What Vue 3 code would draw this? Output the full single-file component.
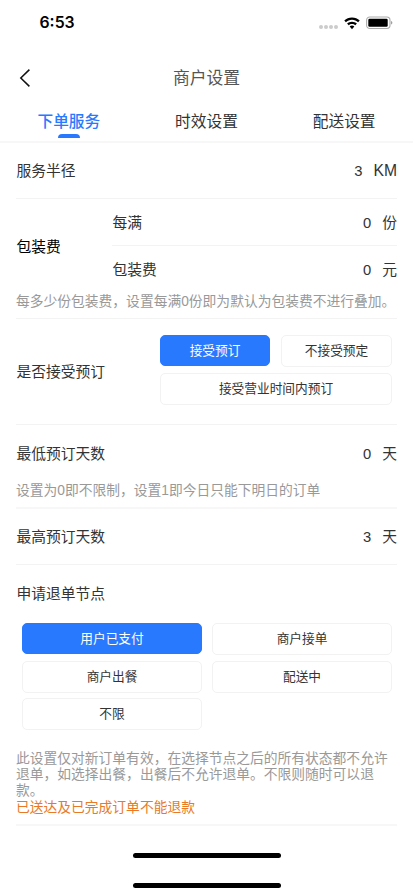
<script setup>
import { ref } from 'vue'

const tabs = ['下单服务', '时效设置', '配送设置']
const activeTab = ref(0)

const bookingOptions = ['接受预订', '不接受预定', '接受营业时间内预订']
const booking = ref(0)

const refundNodes = ['用户已支付', '商户接单', '商户出餐', '配送中', '不限']
const refundNode = ref(0)
</script>

<template>
  <div class="page">
    <header class="status">
      <span class="time">6:53</span>
      <div class="indicators">
        <div class="dots"><i v-for="n in 4" :key="n"></i></div>
        <svg class="wifi" width="16" height="13" viewBox="0 0 16 13">
          <path d="M8 0.5C5 0.5 2.3 1.6 0.3 3.5L1.9 5.2C3.5 3.7 5.6 2.8 8 2.8s4.5.9 6.1 2.4l1.6-1.7C13.700 1.600 11 .5 8 .5Z" />
          <path d="M8 4.700c-1.900 0-3.600.7-4.900 1.900L4.700 8.200C5.600 7.400 6.700 6.900 8 6.900s2.400.5 3.300 1.300l1.600-1.600C11.600 5.400 9.900 4.700 8 4.700Z" />
          <path d="M8 8.600c-.9 0-1.700.3-2.300.9L8 12.200l2.300-2.700C9.700 8.900 8.900 8.600 8 8.600Z" />
        </svg>
        <svg class="battery" width="27" height="14" viewBox="0 0 27 14">
          <rect x="0.600" y="1" width="23.400" height="11.500" rx="3.200" fill="none" stroke="#ababab" stroke-width="1.100" />
          <rect x="2.300" y="2.700" width="19.400" height="8.100" rx="1.200" fill="#000" />
          <path d="M25.200 5v3.600c.7-.3 1.100-1 1.100-1.800s-.4-1.500-1.100-1.800Z" fill="#8a8a8a" />
        </svg>
      </div>
    </header>

    <nav class="navbar">
      <svg class="back" width="12" height="20" viewBox="0 0 12 20">
        <path d="M10.400 1.600 1.800 10l8.600 8.400" fill="none" stroke="#111" stroke-width="1.500" />
      </svg>
      <h1>商户设置</h1>
    </nav>

    <div class="tabs">
      <button
        v-for="(tab, i) in tabs"
        :key="tab"
        :class="['tab', { active: i === activeTab }]"
        @click="activeTab = i"
      >{{ tab }}</button>
    </div>

    <main>
      <section class="row radius">
        <span>服务半径</span>
        <div class="value"><b>3</b><span class="latin">KM</span></div>
      </section>

      <section class="packing">
        <div class="packing-body">
          <span class="packing-title">包装费</span>
          <div class="packing-fields">
            <div class="row field">
              <span>每满</span>
              <div class="value"><b>0</b><span>份</span></div>
            </div>
            <div class="row field">
              <span>包装费</span>
              <div class="value"><b>0</b><span>元</span></div>
            </div>
          </div>
        </div>
        <p class="hint">每多少份包装费，设置每满0份即为默认为包装费不进行叠加。</p>
      </section>

      <section class="row booking">
        <span>是否接受预订</span>
        <div class="booking-options">
          <button
            v-for="(option, i) in bookingOptions"
            :key="option"
            :class="['option', { selected: i === booking, wide: i === 2 }]"
            @click="booking = i"
          >{{ option }}</button>
        </div>
      </section>

      <section class="min-days">
        <div class="row days">
          <span>最低预订天数</span>
          <div class="value"><b>0</b><span>天</span></div>
        </div>
        <p class="hint">设置为0即不限制，设置1即今日只能下明日的订单</p>
      </section>

      <section class="row max-days">
        <span>最高预订天数</span>
        <div class="value"><b>3</b><span>天</span></div>
      </section>

      <section class="refund">
        <h2>申请退单节点</h2>
        <div class="refund-options">
          <button
            v-for="(node, i) in refundNodes"
            :key="node"
            :class="['option', { selected: i === refundNode }]"
            @click="refundNode = i"
          >{{ node }}</button>
        </div>
        <p class="hint">此设置仅对新订单有效，在选择节点之后的所有状态都不允许退单，如选择出餐，出餐后不允许退单。不限则随时可以退款。</p>
        <p class="hint warning">已送达及已完成订单不能退款</p>
      </section>
    </main>

    <footer class="home">
      <i></i>
      <i></i>
    </footer>
  </div>
</template>

<style>
body {
  background: #fff;
}
</style>

<style scoped>
* {
  box-sizing: border-box;
}

.page {
  width: 413px;
  height: 896px;
  overflow: hidden;
  background: #fff;
  color: #333;
  font-family: "Liberation Sans", "Noto Sans CJK SC", sans-serif;
  font-size: 14.750px;
  line-height: 20px;
}

h1,
h2,
p {
  margin: 0;
  font-weight: 400;
}

button {
  padding: 0;
  border: 0;
  background: none;
  color: inherit;
  font-family: inherit;
}

.status {
  display: flex;
  justify-content: space-between;
  height: 46px;
  padding: 0 20px 0 39.500px;
}

.time {
  padding-top: 13px;
  color: #000;
  font-family: Inter, sans-serif;
  font-size: 15.800px;
  font-weight: 600;
}

.indicators {
  display: flex;
  align-items: center;
  height: 46px;
}

.dots {
  display: flex;
  gap: 1px;
  margin: 8px 6px 0 0;
}

.dots i {
  width: 4px;
  height: 4px;
  border-radius: 50%;
  background: #ccc;
}

.wifi {
  margin-right: 6px;
}

.navbar {
  display: grid;
  grid-template-columns: 1fr auto 1fr;
  align-items: center;
  height: 64px;
  padding-left: 19px;
  padding-right: 19px;
}

.navbar h1 {
  padding-top: 2px;
  color: #555;
  font-size: 16.800px;
}

.tabs {
  display: grid;
  grid-template-columns: repeat(3, 1fr);
  height: 33px;
  border-bottom: 2px solid #f7f7f7;
}

.tab {
  display: flex;
  flex-direction: column;
  align-items: center;
  justify-content: space-between;
  height: 28px;
  padding-top: 2px;
  font-size: 15.700px;
  line-height: 20px;
}

.tab.active {
  color: #2979ff;
  font-weight: 500;
}

.tab.active::after {
  content: "";
  width: 22px;
  height: 4px;
  border-radius: 4px 4px 0 0;
  background: #2979ff;
}

main {
  padding: 0 16px;
}

.row {
  display: flex;
  align-items: center;
  justify-content: space-between;
}

.row > span,
.refund h2 {
  padding-left: 0.500px;
}

.value {
  display: flex;
  align-items: center;
  gap: 11px;
}

.value b {
  padding-top: 1px;
  font-weight: 400;
}

.value .latin {
  font-size: 15.700px;
}

.radius {
  height: 56px;
  border-bottom: 1px solid #f3f3f3;
}

.packing {
  height: 120px;
  border-bottom: 1px solid #f3f3f3;
}

.packing-body {
  display: grid;
  grid-template-columns: 96px 1fr;
  align-items: center;
}

.packing-title {
  padding: 2px 0 0 0.500px;
  color: #000;
}

.field {
  height: 47px;
}

.field:first-child {
  padding-top: 1px;
  border-bottom: 1px solid #f3f3f3;
}

.hint {
  padding-top: 1px;
  color: #999;
  font-size: 13.770px;
  line-height: 16.200px;
}

.booking {
  height: 106px;
  padding-right: 5px;
  border-bottom: 1px solid #f3f3f3;
}

.booking-options {
  display: grid;
  grid-template-columns: 110px 111px;
  gap: 6px 11px;
  margin-bottom: 4px;
}

.option {
  height: 32px;
  border: 1px solid #f2f2f2;
  border-radius: 5px;
  font-size: 12.700px;
  line-height: 18px;
}

.option.selected {
  height: 31px;
  padding-top: 1px;
  border-color: #2979ff;
  background: #2979ff;
  color: #fff;
}

.option.wide {
  grid-column: span 2;
}

.min-days {
  height: 84px;
  border-bottom: 2px solid #f7f7f7;
}

.days {
  height: 57px;
}

.max-days {
  height: 56px;
  border-bottom: 1px solid #f3f3f3;
}

.refund {
  height: 261px;
  padding-top: 19px;
  border-bottom: 2px solid #f7f7f7;
}

.refund h2 {
  font-size: 14.750px;
}

.refund-options {
  display: grid;
  grid-template-columns: 180px 180px;
  gap: 5.500px 10px;
  padding: 19px 5px 20px 6px;
}

.home {
  display: flex;
  flex-direction: column;
  align-items: center;
  gap: 25px;
  padding-top: 27px;
}

.home i {
  width: 148px;
  height: 5px;
  border-radius: 3px;
  background: #000;
}

.hint.warning {
  padding-top: 0;
  color: #e87a27;
}
</style>
